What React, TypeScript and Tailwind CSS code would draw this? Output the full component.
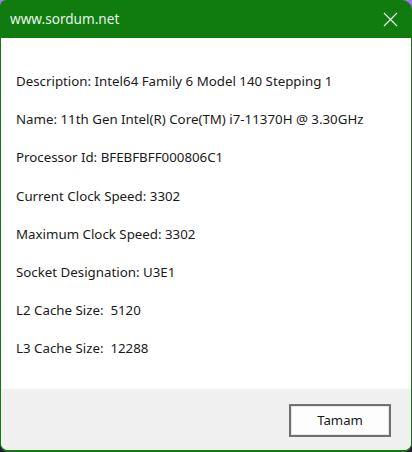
const rows = [
  'Description: Intel64 Family 6 Model 140 Stepping 1',
  'Name: 11th Gen Intel(R) Core(TM) i7-11370H @ 3.30GHz',
  'Processor Id: BFEBFBFF000806C1',
  'Current Clock Speed: 3302',
  'Maximum Clock Speed: 3302',
  'Socket Designation: U3E1',
  'L2 Cache Size:  5120',
  'L3 Cache Size:  12288',
];

export default function App() {
  return (
    <div className="h-[452px] w-[412px] bg-[linear-gradient(180deg,#a07ae6_0%,#5b3a8c_50%,#2a1840_100%)] font-['Noto_Sans',sans-serif]">
      <div className="flex h-[452px] w-[412px] flex-col overflow-hidden rounded-tl-[6px] rounded-tr-[10px] rounded-b-[8px] bg-[#107c10]">
        <div className="flex h-[38px] items-center justify-between pl-[10px] pr-[14px]">
          <span className="text-[13.6px] text-[#e8f3e8]">www.sordum.net</span>
          <svg width="15" height="15" viewBox="0 0 15 15" className="mt-[1px]">
            <path d="M1 1L14 14M14 1L1 14" stroke="#e8f3e8" strokeWidth="1.2" />
          </svg>
        </div>
        <div className="mx-[1px] mb-[2px] flex flex-1 flex-col overflow-hidden rounded-b-[7px] bg-white">
          <div className="flex h-[351px] flex-col pt-[24px] pl-[15px] text-[13.3px] text-[#1a1a1a]">
            {rows.map((r) => (
              <div key={r} className="whitespace-pre leading-[38.2px]">
                {r}
              </div>
            ))}
          </div>
          <div className="flex flex-1 items-start justify-end bg-[#f0f0f0] pt-[15px] pr-[20px]">
            <button className="h-[33px] w-[102px] border-2 border-[#707070] bg-[#fdfdfd] text-[13.2px] text-[#1a1a1a] shadow-[inset_0_0_0_1px_#e5e5e5]">
              Tamam
            </button>
          </div>
        </div>
      </div>
    </div>
  );
}
